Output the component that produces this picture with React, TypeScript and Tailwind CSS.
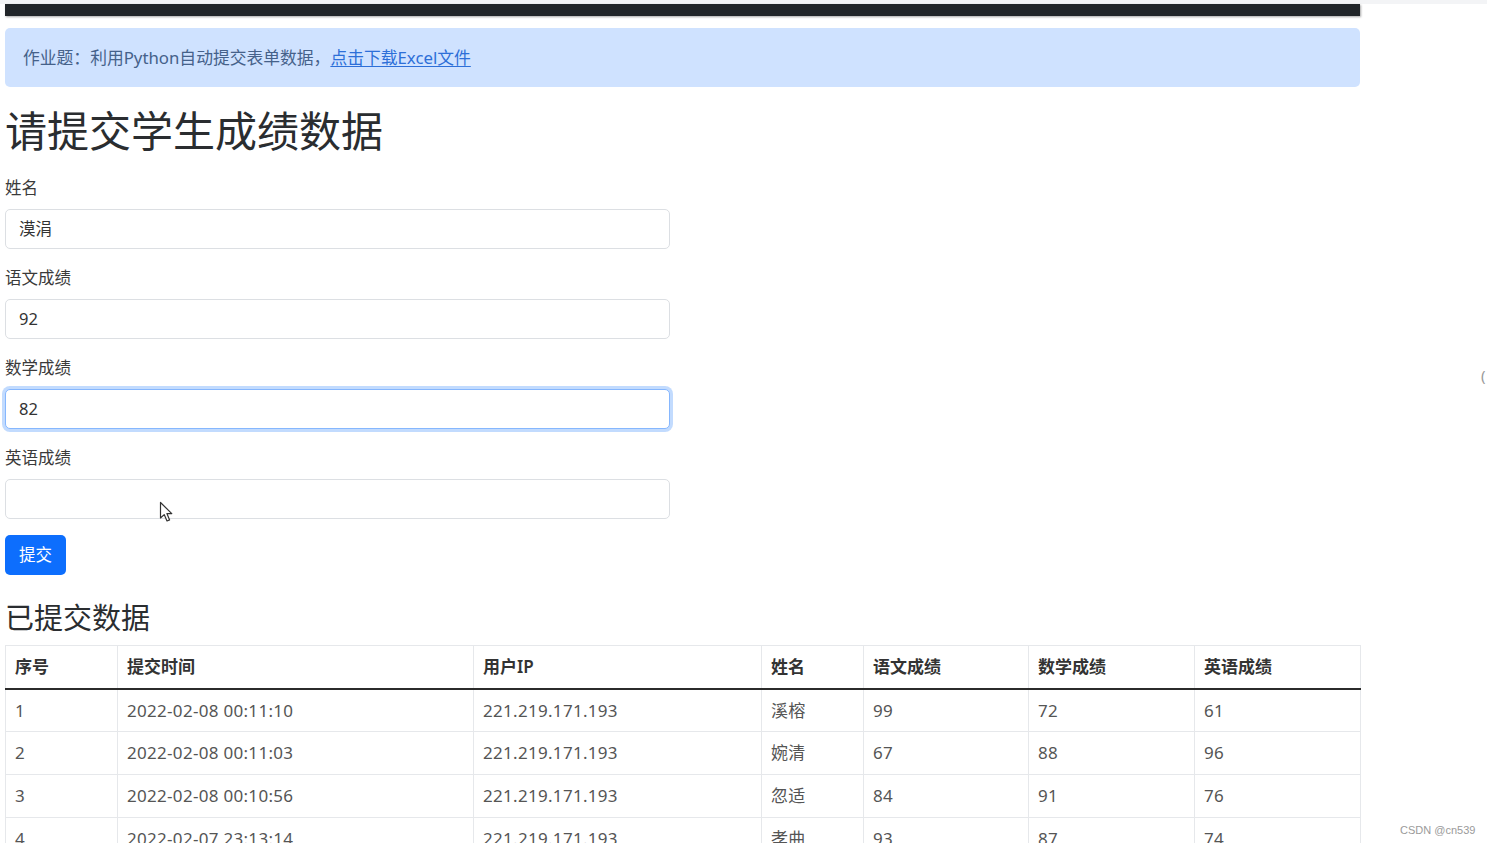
const rows = [
  { id: 1, time: '2022-02-08 00:11:10', ip: '221.219.171.193', name: '溪榕', cn: 99, math: 72, en: 61 },
  { id: 2, time: '2022-02-08 00:11:03', ip: '221.219.171.193', name: '婉清', cn: 67, math: 88, en: 96 },
  { id: 3, time: '2022-02-08 00:10:56', ip: '221.219.171.193', name: '忽适', cn: 84, math: 91, en: 76 },
  { id: 4, time: '2022-02-07 23:13:14', ip: '221.219.171.193', name: '孝曲', cn: 93, math: 87, en: 74 },
];

const cols = [
  { label: '序号', w: 'w-[112px]' },
  { label: '提交时间', w: 'w-[356px]' },
  { label: '用户IP', w: 'w-[288px]' },
  { label: '姓名', w: 'w-[102px]' },
  { label: '语文成绩', w: 'w-[165px]' },
  { label: '数学成绩', w: 'w-[166px]' },
  { label: '英语成绩', w: 'w-[166px]' },
];

const Field = ({ label, value, focused }: { label: string; value: string; focused?: boolean }) => (
  <div className="flex flex-col">
    <label className="h-[22px] leading-[22px] text-[16.5px] text-[#3a3a3a] mb-[10px]">{label}</label>
    <div
      className={
        focused
          ? 'w-[665px] h-[40px] rounded-[5px] border border-[#86b7fe] shadow-[0_0_0_3px_rgba(13,110,253,0.25)] bg-white flex items-center px-[13px] text-[16.5px] text-[#333]'
          : 'w-[665px] h-[40px] rounded-[5px] border border-[#dcdfe3] bg-white flex items-center px-[13px] text-[16.5px] text-[#333]'
      }
    >
      {value}
    </div>
  </div>
);

export default function App() {
  return (
    <div className="relative h-[843px] overflow-hidden bg-white font-['Noto_Sans','Noto_Sans_CJK_SC',sans-serif] text-[#212529]">
      <div className="h-[4px] bg-[#f3f4f6]" />
      <div className="ml-[5px] w-[1355px] flex flex-col">
        <div className="h-[12px] bg-[#212529] shadow-[1px_1px_2px_rgba(0,0,0,0.35)]" />

        <div className="mt-[12px] h-[59px] rounded-[5px] bg-[#cfe2ff] flex items-center px-[18px] text-[16.8px] text-[#45618a]">
          作业题：利用Python自动提交表单数据，
          <a className="text-[#2d6fd8] underline underline-offset-2">点击下载Excel文件</a>
        </div>

        <h1 className="mt-[19px] h-[50px] leading-[50px] text-[42px] font-normal text-[#2a2d30]">请提交学生成绩数据</h1>

        <div className="mt-[21px] flex flex-col gap-[18px]">
          <Field label="姓名" value="漠涓" />
          <Field label="语文成绩" value="92" />
          <Field label="数学成绩" value="82" focused />
          <div className="relative">
            <Field label="英语成绩" value="" />
            <svg className="absolute left-[154px] top-[54px]" width="16" height="22" viewBox="0 0 16 22">
              <path d="M1.5 1.5 L1.5 17 L5.2 13.6 L8 20 L10.6 18.9 L7.9 12.6 L12.8 12.6 Z" fill="white" stroke="#333" strokeWidth="1.2" strokeLinejoin="round" />
            </svg>
          </div>
        </div>

        <button className="mt-[16px] w-[61px] h-[40px] rounded-[5px] bg-[#0d6efd] text-white text-[16.5px]">提交</button>

        <h3 className="mt-[25px] h-[35px] leading-[35px] text-[29px] font-normal text-[#2a2d30]">已提交数据</h3>

        <table className="mt-[10px] w-[1355px] table-fixed border-collapse text-[17px]">
          <thead>
            <tr>
              {cols.map((c) => (
                <th
                  key={c.label}
                  className={`${c.w} h-[43px] px-[9px] text-left font-semibold text-[#333] border border-[#e6e8eb] border-b-2 border-b-[#2b2b2b]`}
                >
                  {c.label}
                </th>
              ))}
            </tr>
          </thead>
          <tbody>
            {rows.map((r) => (
              <tr key={r.id} className="text-[#555] tracking-[0.3px]">
                <td className="h-[43px] px-[9px] border border-[#e6e8eb]">{r.id}</td>
                <td className="h-[43px] px-[9px] border border-[#e6e8eb]">{r.time}</td>
                <td className="h-[43px] px-[9px] border border-[#e6e8eb]">{r.ip}</td>
                <td className="h-[43px] px-[9px] border border-[#e6e8eb]">{r.name}</td>
                <td className="h-[43px] px-[9px] border border-[#e6e8eb]">{r.cn}</td>
                <td className="h-[43px] px-[9px] border border-[#e6e8eb]">{r.math}</td>
                <td className="h-[43px] px-[9px] border border-[#e6e8eb]">{r.en}</td>
              </tr>
            ))}
          </tbody>
        </table>
      </div>

      <span className="absolute left-[1481px] top-[364px] text-[15px] text-[#999]">(</span>
      <span className="absolute left-[1400px] top-[822px] text-[11px] text-[#9a9a9a] font-['Liberation_Sans',sans-serif]">CSDN @cn539</span>
    </div>
  );
}
